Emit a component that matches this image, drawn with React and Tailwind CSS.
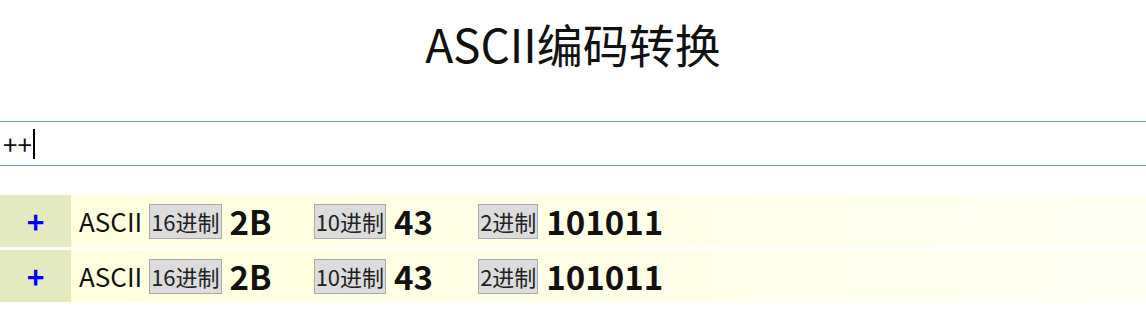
const rows = [
  { hex: "2B", dec: "43", bin: "101011" },
  { hex: "2B", dec: "43", bin: "101011" },
];

function Group({ label, value }) {
  return (
    <div className="flex w-[164.5px] shrink-0 items-center whitespace-nowrap">
      <span className="shrink-0 border border-[#a9a9a9] bg-[#dcdcdc] px-px py-px text-[22px] leading-[31px] text-[#222]">
        {label}
      </span>
      <span className="ml-[8px] text-[33px] font-bold leading-none text-[#111]">{value}</span>
    </div>
  );
}

export default function App() {
  return (
    <div className="min-h-screen bg-white font-['Noto_Sans_CJK_SC','Noto_Sans',sans-serif] text-[#111]">
      <h1 className="mt-[13px] text-center text-[46px] font-normal leading-[60px]">ASCII编码转换</h1>

      <div className="mt-[48px] flex h-[45px] items-center border-y border-[#6495ed] pl-[3px]">
        <span className="text-[26px] leading-none">++</span>
        <span className="ml-px h-[30px] w-[2px] bg-black" />
      </div>

      <div className="mt-[29px] flex flex-col gap-[3px]">
        {rows.map((r, i) => (
          <div key={i} className="flex h-[52px] items-center bg-gradient-to-r from-[#ffffdc] to-[#fffff2]">
            <div className="flex h-full w-[71px] shrink-0 items-center justify-center bg-[#e6eac1] text-[30px] font-bold text-[#0000ff]">
              +
            </div>
            <span className="ml-[8px] mr-[7px] text-[26px] leading-none">ASCII</span>
            <Group label="16进制" value={r.hex} />
            <Group label="10进制" value={r.dec} />
            <Group label="2进制" value={r.bin} />
          </div>
        ))}
      </div>
    </div>
  );
}
